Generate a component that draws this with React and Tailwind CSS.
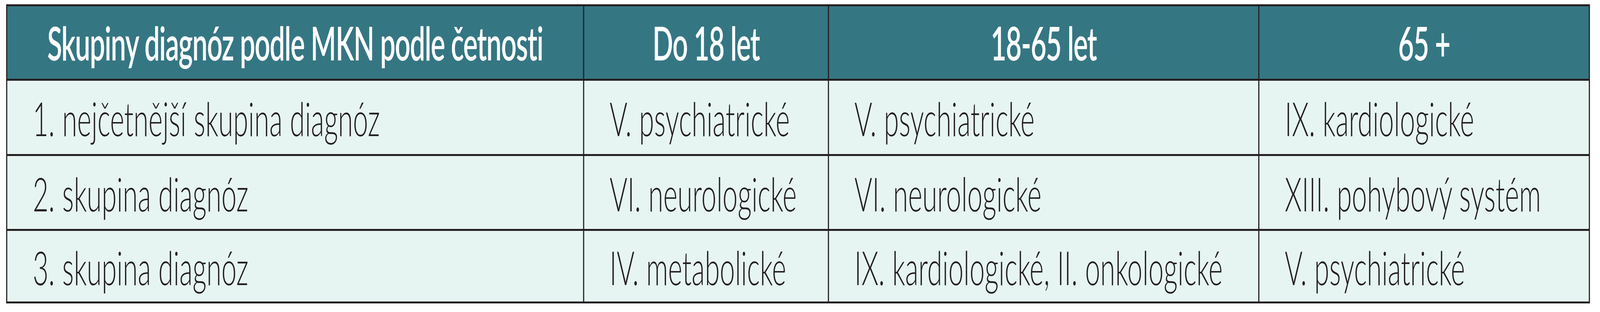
import React from 'react';

const headers = ['Skupiny diagnóz podle MKN podle četnosti', 'Do 18 let', '18-65 let', '65 +'];

const rows = [
  ['1. nejčetnější skupina diagnóz', 'V. psychiatrické', 'V. psychiatrické', 'IX. kardiologické'],
  ['2. skupina diagnóz', 'VI. neurologické', 'VI. neurologické', 'XIII. pohybový systém'],
  ['3. skupina diagnóz', 'IV. metabolické', 'IX. kardiologické, II. onkologické', 'V. psychiatrické'],
];

export default function App() {
  return (
    <div className="bg-white h-[800px] overflow-hidden">
      <div
        className="w-[7052px] h-[800px] pl-[27px] pt-[11px] origin-top-left scale-x-[0.5808]"
        style={{ fontFamily: 'Lato, "Open Sans", sans-serif' }}
      >
        <div className="inline-grid grid-cols-[2538px_1074px_1892px_1452px] grid-rows-[186px_188px_187px_181px] gap-[5px] p-[5px] bg-[#231f20]">
          {headers.map((h) => (
            <div
              key={h}
              className="bg-[#357683] flex items-center justify-center text-white font-semibold text-[120px] leading-none tracking-[-0.02em] whitespace-nowrap"
            >
              {h}
            </div>
          ))}
          {rows.map((row, i) =>
            row.map((cell, j) => (
              <div
                key={`${i}-${j}`}
                className="bg-[#e7f5f2] flex items-center pl-[112px] text-[#231f20] font-light text-[120px] leading-none whitespace-nowrap pt-[4px]"
              >
                {cell}
              </div>
            ))
          )}
        </div>
      </div>
    </div>
  );
}
